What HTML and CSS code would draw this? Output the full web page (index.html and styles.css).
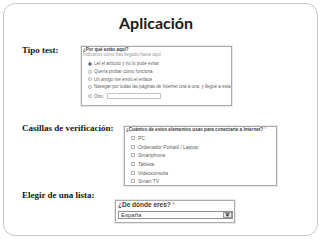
FILE: index.html
```html
<!DOCTYPE html>
<html lang="es">
<head>
<meta charset="utf-8">
<title>Aplicación</title>
<link rel="stylesheet" href="styles.css">
</head>
<body>
<div class="slide">
  <h1 class="title">Aplicación</h1>

  <div class="row row-radio">
    <div class="label">Tipo test:</div>
    <div class="form form-radio">
      <div class="q">¿Por qué estás aquí?</div>
      <div class="hint">Indicanos cómo has llegado hasta aquí</div>
      <ul class="opts">
        <li><span class="radio on"></span>Leí el artículo y no lo pude evitar</li>
        <li><span class="radio"></span>Quería probar cómo funciona</li>
        <li><span class="radio"></span>Un amigo me envió el enlace</li>
        <li><span class="radio"></span>Navegar por todas las páginas de Internet una a una, y llegué a esta</li>
        <li class="other"><span class="radio"></span>Otro: <span class="textbox"></span></li>
      </ul>
    </div>
  </div>

  <div class="row row-check">
    <div class="label">Casillas de verificación:</div>
    <div class="form form-check">
      <div class="q">¿Cuántos de estos elementos usas para conectarte a Internet? <span class="req">*</span></div>
      <ul class="checks">
        <li><span class="box"></span>PC</li>
        <li><span class="box"></span>Ordenador Portatil / Laptop</li>
        <li><span class="box"></span>Smartphone</li>
        <li><span class="box"></span>Tableta</li>
        <li><span class="box"></span>Videoconsola</li>
        <li><span class="box"></span>Smart TV</li>
      </ul>
    </div>
  </div>

  <div class="row row-select">
    <div class="label">Elegir de una lista:</div>
    <div class="form form-select">
      <div class="q">¿De dónde eres? <span class="req">*</span></div>
      <div class="select">
        <span class="value">España</span>
        <span class="btn"><svg width="5" height="4" viewBox="0 0 5 4"><rect x="0.5" y="0" width="4" height="0.8" fill="#444"/><path d="M0.5 1.5 H4.5 L2.5 3.8 Z" fill="#222"/></svg></span>
      </div>
    </div>
  </div>
</div>
</body>
</html>
```

FILE: styles.css
```css
* { box-sizing: border-box; margin: 0; padding: 0; }
html, body { background: #ffffff; }
body { width: 320px; height: 240px; overflow: hidden; }

.slide {
  margin: 3px 0 0 3px;
  width: 315px;
  height: 233px;
  border: 1px solid #c6c6c6;
  border-radius: 12px;
  padding-top: 9px;
}

.title {
  font-family: Lato, "DejaVu Sans", sans-serif;
  font-weight: 700;
  font-size: 16px;
  line-height: 20px;
  height: 20px;
  color: #1a1a1a;
  text-align: center;
  padding-right: 9px;
}

.row {
  display: flex;
  align-items: flex-start;
  padding-left: 18px;
}
.row-radio { margin-top: 12px; }
.row-check { margin-top: 17px; }
.row-select { margin-top: 4px; }

.label {
  font-family: "Liberation Serif", "Times New Roman", serif;
  font-weight: 700;
  font-size: 9px;
  line-height: 10px;
  color: #161616;
  white-space: nowrap;
  flex: 0 0 auto;
}
.row-radio .label { width: 59px; }
.row-check .label { width: 102px; }
.row-select .label { width: 93px; }

.form {
  border: 1px solid #ababab;
  box-shadow: 0 0 0 1px #e8e8e8;
  background: #fff;
  font-family: "Liberation Sans", Arial, sans-serif;
  color: #5e5e5e;
  white-space: nowrap;
  overflow: hidden;
  flex: 0 0 auto;
}
.req { color: #d66; font-weight: 400; }

/* radio form */
.form-radio {
  margin-top: 1px;
  width: 151px;
  height: 60px;
  padding-left: 1px;
  font-size: 4.5px;
}
.form-radio .q {
  font-weight: 700;
  color: #3a3a3a;
  line-height: 5px;
}
.hint { color: #9a9a9a; line-height: 5px; }
.opts { list-style: none; margin-top: 3.2px; }
.opts li {
  height: 7.6px;
  display: flex;
  align-items: center;
}
.opts li.other { margin-top: 2.2px; height: 7px; }
.radio {
  width: 4px;
  height: 4px;
  margin-left: 5px;
  margin-right: 2px;
  border: 0.8px solid #b4b4b4;
  border-radius: 50%;
  background: #fff;
  flex: 0 0 auto;
}
.radio.on {
  border-color: #8a94a8;
  background: radial-gradient(circle, #3d5080 0 1px, #fff 1.3px);
}
.textbox {
  width: 54px;
  height: 6px;
  margin-left: 3px;
  border: 0.8px solid #c4c4c4;
  background: #fff;
}

/* checkbox form */
.form-check {
  margin-top: 3px;
  width: 153px;
  height: 60px;
  padding-left: 1px;
  font-size: 5px;
}
.form-check .q {
  font-weight: 700;
  font-size: 4.6px;
  color: #3a3a3a;
  line-height: 6px;
}
.checks { list-style: none; margin-top: 1px; }
.checks li {
  height: 8.6px;
  display: flex;
  align-items: center;
}
.box {
  width: 4px;
  height: 4px;
  margin-left: 5px;
  margin-right: 3px;
  border: 0.8px solid #b8b8b8;
  background: #f4f4f4;
  flex: 0 0 auto;
}

/* select form */
.form-select {
  margin-top: 10px;
  width: 120px;
  height: 23px;
  padding-left: 2px;
}
.form-select .q {
  font-weight: 700;
  font-size: 6.5px;
  line-height: 8px;
  color: #3a3a3a;
}
.select {
  margin-top: 1.5px;
  width: 115px;
  height: 8px;
  border: 1px solid #8e8e8e;
  display: flex;
  align-items: center;
  justify-content: space-between;
  padding-left: 2px;
  padding-right: 0.5px;
  font-size: 6px;
  color: #3a3a3a;
}
.btn {
  width: 9px;
  height: 6px;
  border: 0.8px solid #9a9a9a;
  background: linear-gradient(#fbfbfb, #dcdcdc);
  display: flex;
  align-items: center;
  justify-content: center;
}
.btn svg { display: block; }
```
